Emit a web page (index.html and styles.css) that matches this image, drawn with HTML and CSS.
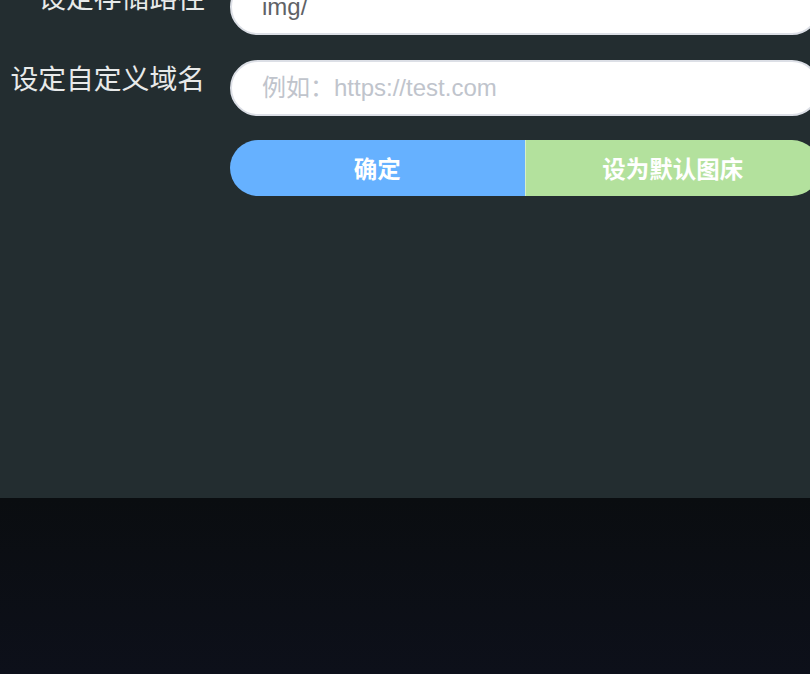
FILE: index.html
```html
<!DOCTYPE html>
<html lang="zh-CN">
<head>
<meta charset="utf-8">
<title>图床设置</title>
<link rel="stylesheet" href="styles.css">
</head>
<body>
<main class="panel">
  <form class="form">
    <div class="row">
      <label class="label">设定存储路径</label>
      <input class="input" type="text" value="img/">
    </div>
    <div class="row">
      <label class="label">设定自定义域名</label>
      <input class="input" type="text" placeholder="例如：https://test.com">
    </div>
    <div class="actions">
      <button type="button" class="btn btn-primary">确定</button>
      <button type="button" class="btn btn-success">设为默认图床</button>
    </div>
  </form>
</main>
<footer class="bottom"></footer>
</body>
</html>
```
FILE: styles.css
```css
html, body {
  margin: 0;
  padding: 0;
}
body {
  width: 810px;
  height: 674px;
  overflow: hidden;
  font-family: "Liberation Sans", "Noto Sans CJK SC", sans-serif;
  background: #0c0f16;
}
.panel {
  height: 498px;
  background: #232d30;
  overflow: hidden;
}
.form {
  margin-top: -21px;
  display: flex;
  flex-direction: column;
  gap: 25px;
}
.row {
  display: flex;
  align-items: flex-start;
}
.label {
  width: 205px;
  flex: none;
  text-align: right;
  font-size: 27.8px;
  line-height: 40px;
  color: #e8eaea;
  white-space: nowrap;
}
.input {
  flex: none;
  margin-left: 25px;
  width: 590px;
  height: 56px;
  box-sizing: border-box;
  border: 2px solid #dcdfe6;
  border-radius: 28px;
  padding: 0 30px;
  background: #fff;
  font-family: "Liberation Sans", "Noto Sans CJK SC", sans-serif;
  font-size: 24px;
  color: #606266;
  outline: none;
}
.input::placeholder {
  color: #c0c4cc;
}
.actions {
  display: flex;
  margin-left: 230px;
  width: 590px;
  margin-top: -1px;
}
.btn {
  flex: 1;
  height: 56px;
  border: none;
  padding: 0;
  color: #fff;
  font-family: "Liberation Sans", "Noto Sans CJK SC", sans-serif;
  font-size: 23.5px;
  font-weight: bold;
  cursor: pointer;
}
.btn-primary {
  background: #66b1ff;
  border-radius: 28px 0 0 28px;
}
.btn-success {
  background: #b3e19d;
  border-left: 1px solid #d6eec9;
  border-radius: 0 28px 28px 0;
}
.bottom {
  height: 176px;
  background: linear-gradient(#0a0d10, #0d101a);
}
```
